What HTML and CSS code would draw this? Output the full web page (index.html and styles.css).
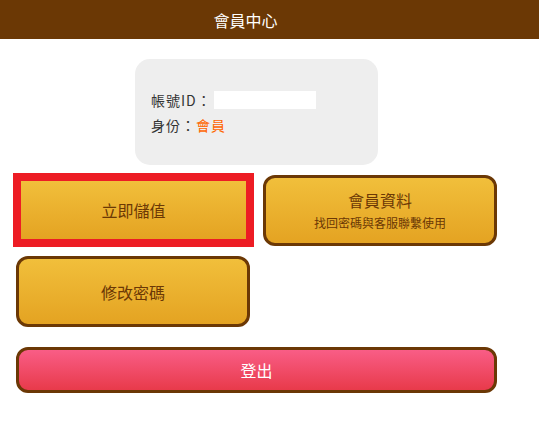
FILE: index.html
```html
<!DOCTYPE html>
<html lang="zh-Hant">
<head>
<meta charset="utf-8">
<title>會員中心</title>
<link rel="stylesheet" href="styles.css">
</head>
<body>
<header class="topbar">會員中心</header>
<main class="content">
  <section class="info">
    <div class="info-row">帳號ID：<span class="id-box"></span></div>
    <div class="info-row">身份：<span class="level">會員</span></div>
  </section>
  <div class="btn-grid">
    <a class="btn btn-gold btn-active">立即儲值</a>
    <a class="btn btn-gold btn-two">
      <span class="btn-title">會員資料</span>
      <span class="btn-sub">找回密碼與客服聯繫使用</span>
    </a>
    <a class="btn btn-gold">修改密碼</a>
  </div>
  <a class="btn btn-logout">登出</a>
</main>
</body>
</html>
```
FILE: styles.css
```css
* { box-sizing: border-box; }
html, body { margin: 0; padding: 0; background: #fff; }
body {
  font-family: "Noto Sans CJK TC", "Noto Sans", "Liberation Sans", sans-serif;
  color: #333;
}
.topbar {
  height: 39px;
  background: #6b3805;
  color: #fff;
  font-size: 16px;
  display: flex;
  align-items: center;
  justify-content: center;
  padding-right: 48px;
}
.content {
  width: 481px;
  margin-left: 16px;
  padding-top: 20px;
  display: flex;
  flex-direction: column;
}
.info {
  align-self: center;
  width: 243px;
  height: 106px;
  background: #eeeeee;
  border-radius: 15px;
  padding: 28px 16px;
  font-size: 14px;
  letter-spacing: 1px;
}
.info-row {
  height: 25px;
  display: flex;
  align-items: center;
}
.id-box {
  display: inline-block;
  width: 102px;
  height: 18px;
  background: #fff;
  margin-left: 2px;
}
.level { color: #ff6600; }
.btn-grid {
  margin-top: 10px;
  display: grid;
  grid-template-columns: 234px 234px;
  column-gap: 13px;
  row-gap: 10px;
}
.btn {
  display: flex;
  flex-direction: column;
  align-items: center;
  justify-content: center;
  text-decoration: none;
  border: 3px solid #6b3805;
  border-radius: 12px;
  font-size: 16px;
}
.btn-gold {
  height: 71px;
  color: #6b3805;
  background: linear-gradient(#f1bf3b, #e4a322);
}
.btn-active {
  margin: -2px -4px -1px -3px;
  border: 8px solid #ed1c24;
  border-radius: 0;
  height: 74px;
}
.btn-title { font-size: 16px; line-height: 20px; }
.btn-sub { font-size: 12px; line-height: 16px; margin-top: 5px; }
.btn-logout {
  margin-top: 20px;
  height: 46px;
  color: #fff;
  background: linear-gradient(#f95d86, #e83a4a);
}
```
